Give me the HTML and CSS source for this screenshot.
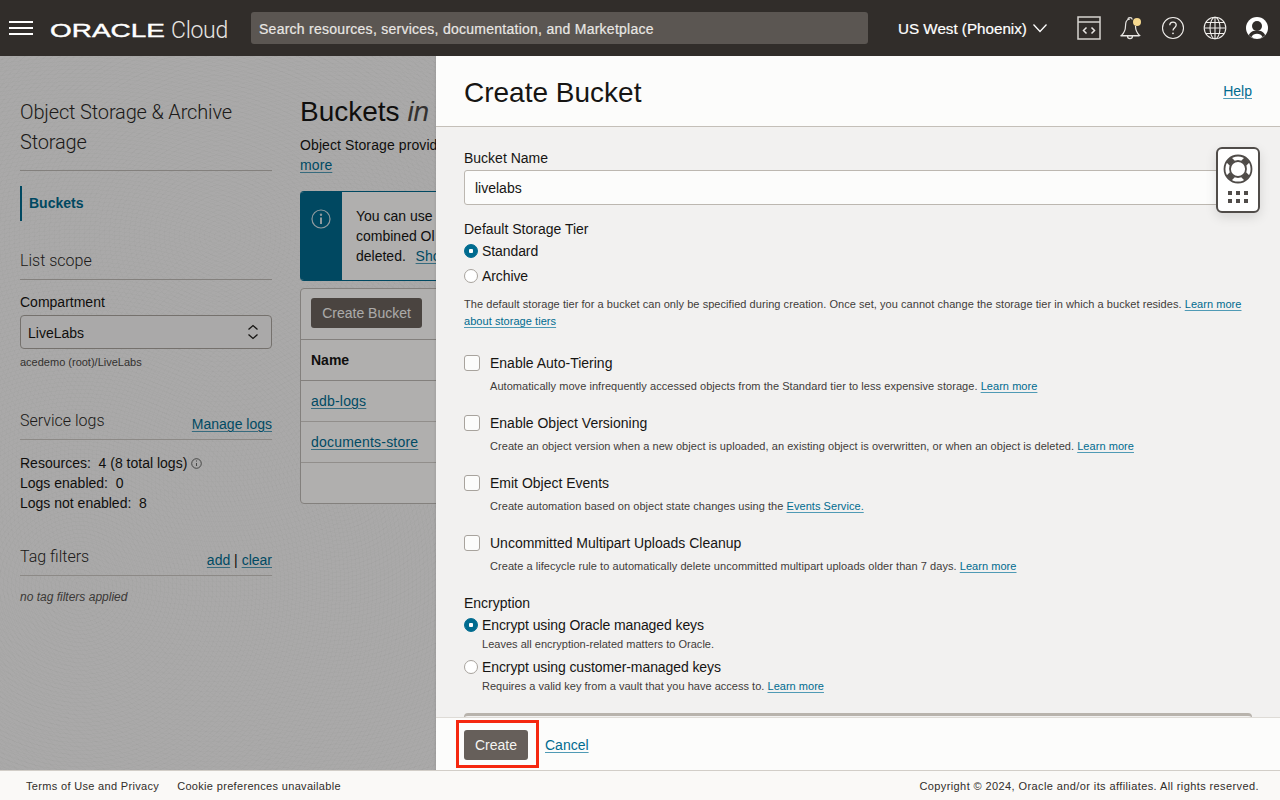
FILE: index.html
```html
<!DOCTYPE html>
<html lang="en">
<head>
<meta charset="utf-8">
<title>Create Bucket</title>
<link rel="stylesheet" href="styles.css">
</head>
<body>
<header class="topbar">
  <button class="menu" aria-label="Menu"><span></span><span></span><span></span></button>
  <div class="brand"><span class="oracle">ORACLE</span><span class="cloud">Cloud</span></div>
  <div class="search">Search resources, services, documentation, and Marketplace</div>
  <div class="region">US West (Phoenix)
    <svg width="16" height="10" viewBox="0 0 16 10"><path d="M1.500 1.500 8 8.500l6.500-7" fill="none" stroke="#fff" stroke-width="1.300"/></svg>
  </div>
  <div class="tools">
    <svg width="24" height="24" viewBox="0 0 24 24" fill="none" stroke="#d6d4d0" stroke-width="1.500"><rect x="1" y="1" width="22" height="22"/><path d="M1 6h22"/><path d="M9.500 11.500 6.500 14.500l3 3M14.500 11.500l3 3-3 3" stroke="#e8e6e3"/></svg>
    <svg width="24" height="26" viewBox="0 0 24 26" fill="none" stroke="#e8e6e3" stroke-width="1.200"><path d="M11 4C7 4 6.500 8 6.500 11c0 4-1.500 7-4 9.500h18c-2.500-2.500-4-5.500-4-9.500"/><path d="M8.800 4.500C9 2 13 2 13.200 4.500"/><path d="M1.500 21h19M8.500 21c0 3.500 5 3.500 5 0"/><circle cx="18" cy="7" r="4" fill="#f6d98f" stroke="none"/></svg>
    <svg width="24" height="24" viewBox="0 0 24 24" fill="none" stroke="#f0eeeb" stroke-width="1.100"><circle cx="12" cy="12" r="10.500"/><path d="M8.800 9.300c0-4.200 6.400-4.200 6.400-.2 0 2.600-3.200 2.600-3.200 5.400" stroke-width="1.300"/><circle cx="12" cy="17.300" r=".9" fill="#f0eeeb" stroke="none"/></svg>
    <svg width="24" height="24" viewBox="0 0 24 24" fill="none" stroke="#f0eeeb" stroke-width="1.100"><circle cx="12" cy="12" r="10.800"/><ellipse cx="12" cy="12" rx="5" ry="10.800"/><path d="M12 1v22M1.200 12h21.600M3 6.500h18M3 17.500h18"/></svg>
    <svg width="24" height="24" viewBox="0 0 24 24"><circle cx="12" cy="12" r="11" fill="#fff"/><circle cx="12" cy="10" r="5" fill="#312d2a"/><path d="M3.800 19.300c1.500-3.700 4.500-4.800 8.200-4.800s6.700 1.100 8.200 4.800A11 11 0 0 1 12 23a11 11 0 0 1-8.200-3.700Z" fill="#312d2a"/><path d="M6.500 21c1-2.500 3-3.300 5.500-3.300s4.500.8 5.500 3.300A11 11 0 0 1 12 23a11 11 0 0 1-5.500-2Z" fill="#fff"/></svg>
  </div>
</header>

<main class="stage">
  <div class="page">
    <aside class="side">
      <h2 class="side-title">Object Storage &amp; Archive Storage</h2>
      <nav class="side-nav"><a class="side-current">Buckets</a></nav>
      <h3 class="side-head scope">List scope</h3>
      <div class="field-label">Compartment</div>
      <div class="select"><span>LiveLabs</span>
        <svg width="12" height="16" viewBox="0 0 12 16" fill="none" stroke="#1f1d1b" stroke-width="1.300"><path d="m1.500 5.500 4.500-4 4.500 4M1.500 10.500l4.500 4 4.500-4"/></svg>
      </div>
      <div class="path">acedemo (root)/LiveLabs</div>
      <div class="side-row logs"><h3>Service logs</h3><a class="link">Manage logs</a></div>
      <div class="stats">
        <div>Resources:&nbsp; 4 (8 total logs) <svg class="mini-info" width="11" height="11" viewBox="0 0 11 11" fill="none" stroke="#444" stroke-width=".8"><circle cx="5.500" cy="5.500" r="4.800"/><path d="M5.500 5v3M5.500 2.500v1"/></svg></div>
        <div>Logs enabled:&nbsp; 0</div>
        <div>Logs not enabled:&nbsp; 8</div>
      </div>
      <div class="side-row tags"><h3>Tag filters</h3><span class="tag-links"><a class="link">add</a> | <a class="link">clear</a></span></div>
      <div class="no-tags">no tag filters applied</div>
    </aside>
    <section class="content">
      <h1>Buckets <em>in</em></h1>
      <p class="intro">Object Storage provides<br><a class="link">more</a></p>
      <div class="banner">
        <div class="banner-icon"><svg width="20" height="20" viewBox="0 0 20 20" fill="none" stroke="#cfdde3" stroke-width="1.200"><circle cx="10" cy="10" r="9"/><path d="M10 8.500V15" stroke-width="2"/><circle cx="10" cy="5.700" r="1.200" fill="#cfdde3" stroke="none"/></svg></div>
        <div class="banner-text">You can use<br>combined Ol<br>deleted.&nbsp; <a class="link show">Show</a></div>
      </div>
      <div class="table">
        <div class="toolbar"><span class="btn-dim">Create Bucket</span></div>
        <div class="row head">Name</div>
        <div class="row"><a class="link">adb-logs</a></div>
        <div class="row"><a class="link">documents-store</a></div>
        <div class="row last"></div>
      </div>
    </section>
  </div>
  <div class="scrim"></div>

  <section class="panel">
    <div class="panel-head"><h2>Create Bucket</h2><a class="link">Help</a></div>
    <div class="panel-body">
      <label class="lab first">Bucket Name</label>
      <div class="input">livelabs</div>
      <label class="lab tier">Default Storage Tier</label>
      <div class="radio one"><i class="dot on"></i>Standard</div>
      <div class="radio two"><i class="dot"></i>Archive</div>
      <p class="help">The default storage tier for a bucket can only be specified during creation. Once set, you cannot change the storage tier in which a bucket resides. <a class="link">Learn more<br>about storage tiers</a></p>
      <div class="check"><i class="box"></i>Enable Auto-Tiering</div>
      <p class="desc">Automatically move infrequently accessed objects from the Standard tier to less expensive storage. <a class="link">Learn more</a></p>
      <div class="check"><i class="box"></i>Enable Object Versioning</div>
      <p class="desc">Create an object version when a new object is uploaded, an existing object is overwritten, or when an object is deleted. <a class="link">Learn more</a></p>
      <div class="check"><i class="box"></i>Emit Object Events</div>
      <p class="desc">Create automation based on object state changes using the <a class="link">Events Service.</a></p>
      <div class="check"><i class="box"></i>Uncommitted Multipart Uploads Cleanup</div>
      <p class="desc">Create a lifecycle rule to automatically delete uncommitted multipart uploads older than 7 days. <a class="link">Learn more</a></p>
      <label class="lab enc">Encryption</label>
      <div class="radio one"><i class="dot on"></i>Encrypt using Oracle managed keys</div>
      <p class="sub">Leaves all encryption-related matters to Oracle.</p>
      <div class="radio two"><i class="dot"></i>Encrypt using customer-managed keys</div>
      <p class="sub">Requires a valid key from a vault that you have access to. <a class="link">Learn more</a></p>
      <div class="next-box"></div>
    </div>
    <div class="panel-foot">
      <span class="highlight"><button class="primary">Create</button></span>
      <a class="link">Cancel</a>
    </div>
  </section>

  <div class="widget">
    <svg width="30" height="30" viewBox="0 0 30 30" fill="none" stroke="#4f4b48"><circle cx="15" cy="15" r="13.500" stroke-width="1.800"/><path d="M9.300 9.300 5.800 5.800M20.700 9.300l3.500-3.500M9.300 20.700l-3.500 3.500M20.700 20.700l3.500 3.500" stroke-width="7"/><circle cx="15" cy="15" r="8" fill="#fff" stroke-width="1.800"/></svg>
    <div class="dots"><i></i><i></i><i></i><i></i><i></i><i></i></div>
  </div>
</main>

<footer class="bottom">
  <a>Terms of Use and Privacy</a><a class="cookie">Cookie preferences unavailable</a>
  <span class="copy">Copyright © 2024, Oracle and/or its affiliates. All rights reserved.</span>
</footer>
</body>
</html>
```
FILE: styles.css
```css
* { box-sizing: border-box; }
html, body { height: 100%; }
body {
  margin: 0;
  height: 800px;
  overflow: hidden;
  display: flex;
  flex-direction: column;
  font-family: "Liberation Sans", Arial, sans-serif;
  font-size: 14px;
  color: #161513;
  background: #f4f3f2;
}
h1, h2, h3, p { margin: 0; font-weight: 400; }
.link { color: #006b8f; text-decoration: underline; text-decoration-thickness: 1px; text-underline-offset: 2px; text-decoration-color: #4f9ab5; }

/* top bar */
.topbar { flex: 0 0 56px; background: #312d2a; display: flex; align-items: center; color: #fff; }
.menu { width: 24px; height: 14px; margin-left: 9px; padding: 0; border: 0; background: none; display: flex; flex-direction: column; justify-content: space-between; }
.menu span { display: block; height: 2px; background: #fff; }
.brand { margin-left: 17px; margin-top: 6px; width: 184px; display: flex; align-items: center; }
.oracle { display: inline-block; width: 114px; font-size: 19px; line-height: 20px; -webkit-text-stroke: .4px #fff; transform: scaleX(1.470); transform-origin: left center; white-space: nowrap; }
.cloud { margin-left: 7px; font-family: Roboto, "Liberation Sans", sans-serif; font-weight: 300; font-size: 23px; line-height: 24px; color: #e8e6e3; letter-spacing: -.3px; }
.search { margin-left: 17px; width: 617px; height: 32px; line-height: 34px; padding-left: 8px; background: #5b5652; border-radius: 3px; color: #e9e7e4; font-size: 14px; letter-spacing: .26px; -webkit-text-stroke: .2px #e9e7e4; }
.region { margin-left: 30px; width: 179px; display: flex; align-items: center; gap: 5px; font-size: 15.200px; white-space: nowrap; -webkit-text-stroke: .2px #fff; }
.tools { display: flex; align-items: center; gap: 18px; }

/* stage */
.stage { position: relative; flex: 0 0 714px; overflow: hidden; }
.page {
  display: flex;
  height: 100%;
  background-color: #f4f3f2;
  background-image:
    repeating-radial-gradient(circle at 80px 530px, rgba(0,0,0,.016) 0 1px, transparent 1px 4px),
    repeating-radial-gradient(circle at 220px 180px, rgba(0,0,0,.012) 0 1px, transparent 1px 5px),
    repeating-radial-gradient(circle at 340px 420px, rgba(0,0,0,.012) 0 1px, transparent 1px 4px);
}
.scrim { position: absolute; inset: 0; background: rgba(0,0,0,.3); }
.side { flex: 0 0 252px; margin-left: 20px; padding-top: 41px; }
.side-title { font-family: Roboto, "Liberation Sans", sans-serif; font-weight: 300; font-size: 20px; line-height: 30px; letter-spacing: -.16px; padding-bottom: 13px; border-bottom: 1px solid #bcb8b3; color: #2a2826; }
.side-nav { margin-top: 15px; height: 35px; padding-bottom: 2px; border-left: 2px solid #00688c; display: flex; align-items: center; padding-left: 7px; }
.side-current { font-weight: 700; color: #00688c; }
.side-head, .side-row h3 { font-family: Roboto, "Liberation Sans", sans-serif; font-weight: 300; font-size: 16px; line-height: 20px; color: #2a2826; position: relative; top: 1px; }
.side-head.scope { margin-top: 29px; border-bottom: 1px solid #bcb8b3; top: 0; line-height: 21px; padding-bottom: 8px; }
.field-label { margin-top: 12px; line-height: 20px; }
.select { margin-top: 3px; height: 34px; padding: 2px 12px 0 7px; display: flex; align-items: center; justify-content: space-between; background: #f4f3f2; border: 1px solid #a8a39d; border-radius: 4px; }
.select svg { margin-top: -2px; }
.path { margin-top: 5px; font-size: 11px; line-height: 16px; color: #4a4745; }
.side-row { display: flex; justify-content: space-between; padding-bottom: 5px; border-bottom: 1px solid #c9c5c0; }
.side-row .link { margin-top: 4px; line-height: 20px; }
.side-row.logs { margin-top: 40px; }
.stats { margin-top: 13px; line-height: 20px; }
.mini-info { vertical-align: -1px; }
.side-row.tags { margin-top: 33px; }
.tag-links { margin-top: 4px; line-height: 20px; }
.tag-links .link { margin-top: 0; }
.no-tags { margin-top: 13px; font-size: 12px; line-height: 16px; font-style: italic; color: #55524f; }

.content { flex: 0 0 136px; overflow: hidden; margin-left: 28px; padding-top: 38px; }
.content h1 { font-size: 28px; line-height: 35px; white-space: nowrap; }
.content h1 em { color: #4a4745; }
.intro { margin-top: 6px; line-height: 20px; white-space: nowrap; letter-spacing: .1px; }
.banner { margin-top: 16px; width: 400px; height: 90px; display: flex; border-radius: 4px; overflow: hidden; background: #fcfbfa; border-bottom: 1px solid #00688c; border-top: 1px solid #00688c; }
.banner-icon { flex: 0 0 42px; background: #00688c; padding-top: 17px; text-align: center; }
.banner-text { padding: 14px 0 0 14px; line-height: 20px; white-space: nowrap; }
.show { margin-left: 2px; }
.table { margin-top: 7px; width: 400px; border: 1px solid #bcb8b3; border-radius: 4px; background: #fcfbfa; }
.toolbar { height: 51px; padding: 9px 10px; border-bottom: 1px solid #bcb8b3; }
.btn-dim { display: block; width: 111px; height: 30px; line-height: 31px; text-align: center; background: #6b625c; border-radius: 3px; color: #f5f4f2; }
.row { height: 41px; padding: 0 10px; line-height: 40px; border-bottom: 1px solid #d0ccc7; }
.row .link { letter-spacing: .2px; }
.row.head { font-weight: 700; border-bottom-color: #bcb8b3; }
.row.last { height: 40px; border-bottom: 0; }

/* panel */
.panel { position: absolute; top: 0; right: 0; bottom: 0; left: 436px; display: flex; flex-direction: column; background: #f2f1f0; box-shadow: -1px 0 2px rgba(0,0,0,.08); }
.panel-head { flex: 0 0 71px; display: flex; justify-content: space-between; align-items: center; padding: 0 28px; background: #fcfcfb; border-bottom: 1px solid #c4bfb8; }
.panel-head h2 { font-size: 28px; line-height: 36px; padding-top: 4px; color: #161513; }
.panel-body { flex: 1; min-height: 0; overflow: hidden; padding: 21px 28px 0; }
.lab { display: block; line-height: 20px; }
.lab.tier { margin-top: 14px; }
.lab.enc { margin-top: 19px; }
.input { margin-top: 2px; height: 35px; padding-left: 10px; line-height: 35px; background: #fcfcfb; border: 1px solid #bcb7b0; border-radius: 3px; }
.radio { display: flex; align-items: center; line-height: 20px; letter-spacing: -.09px; }
.radio.one { margin-top: 2px; }
.radio.two { margin-top: 5px; }
.dot { flex: none; width: 14px; height: 14px; margin-right: 4px; border-radius: 50%; background: #fff; border: 1px solid #a8a39d; }
.dot.on { background: radial-gradient(circle, #fff 0 2px, #006b8f 2.500px); border-color: #006b8f; }
.help { margin-top: 10px; font-size: 11px; line-height: 17px; color: #3f3c3a; letter-spacing: .052px; }
.check { margin-top: 19px; display: flex; align-items: center; line-height: 20px; }
.help + .check { margin-top: 23px; }
.box { flex: none; width: 16px; height: 16px; margin-right: 10px; background: #fcfcfb; border: 1px solid #a8a39d; border-radius: 3px; }
.desc { margin: 5px 0 0 26px; font-size: 11px; line-height: 16px; color: #3f3c3a; letter-spacing: .052px; }
.sub { margin: 1px 0 0 18px; font-size: 11px; line-height: 16px; color: #3f3c3a; letter-spacing: .02px; }
.next-box { margin-top: 19px; height: 40px; border: 1px solid #b8b3ac; border-top-width: 3px; border-radius: 4px 4px 0 0; }
.panel-foot { flex: 0 0 53px; display: flex; align-items: flex-start; gap: 17px; padding: 12px 28px 0; background: #fcfcfb; border-top: 1px solid #dedbd6; }
.panel-foot .link { line-height: 30px; }
.highlight { position: relative; display: block; }
.highlight::after { content: ""; position: absolute; top: -10px; right: -11px; bottom: -8px; left: -8px; border: 3px solid #f5270f; }
.primary { display: block; width: 64px; height: 30px; padding: 0; border: 0; border-radius: 3px; background: #665f5a; color: #f5f4f2; font: 14px "Liberation Sans", Arial, sans-serif; }

.widget { position: absolute; left: 1216px; top: 91px; width: 44px; height: 66px; padding-top: 5px; display: flex; flex-direction: column; align-items: center; background: #fff; border: 2px solid #504c49; border-radius: 6px; box-shadow: 0 4px 12px rgba(0,0,0,.12); }
.widget svg { display: block; }
.dots { margin-top: 7px; display: grid; grid-template-columns: repeat(3, 4px); gap: 4px 4px; justify-content: center; }
.dots i { width: 4px; height: 4px; background: #504c49; }

/* footer */
.bottom { flex: 0 0 30px; display: flex; align-items: center; padding: 0 21px 0 26px; background: #faf9f7; border-top: 1px solid #d2cec8; font-size: 11px; letter-spacing: .325px; color: #312d2a; }
.cookie { margin-left: 18px; }
.copy { margin-left: auto; letter-spacing: .4px; }
```
